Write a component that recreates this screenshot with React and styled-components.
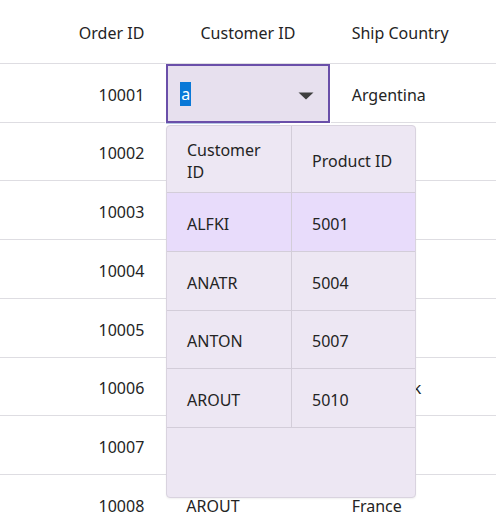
import React from "react";
import styled, { createGlobalStyle } from "styled-components";

const Global = createGlobalStyle`
  html, body { margin: 0; padding: 0; background: #ffffff; }
  body { font-family: "Noto Sans", "Open Sans", sans-serif; color: #242424; }
  * { box-sizing: border-box; }
`;

const Page = styled.div`
  position: relative;
  width: 496px;
  height: 531px;
  overflow: hidden;
  background: #fff;
`;

const Row = styled.div`
  display: grid;
  grid-template-columns: 165.33px 165.33px 165.34px;
  height: ${(p) => (p.$header ? "63.75px" : "58.75px")};
  border-bottom: 1px solid #dedde2;
`;

const Cell = styled.div`
  display: flex;
  align-items: center;
  justify-content: ${(p) => (p.$right ? "flex-end" : p.$center ? "center" : "flex-start")};
  padding: 4px 21px 0 21px;
  font-size: 16px;
  white-space: nowrap;
  overflow: hidden;
`;

const EditCell = styled.div`
  padding: 0 1px 0 1px;
  margin-bottom: -1px;
  background: #fff;
  position: relative;
  z-index: 1;
`;

const EditBox = styled.div`
  position: relative;
  height: 100%;
  border: 2px solid #6a4fa9;
  background: #e7e0ee;
  display: flex;
  align-items: center;
  padding: 1px 14px 0 12px;

  &::after {
    content: "";
    position: absolute;
    left: -2px;
    width: 114px;
    bottom: -3px;
    height: 1px;
    background: #b4c4e4;
  }
`;

const Selected = styled.span`
  background: #0a78d7;
  color: #fff;
  font-size: 16px;
  line-height: 24px;
  padding: 0 1px;
`;

const Spacer = styled.div`
  flex: 1;
`;

const Caret = styled.svg`
  display: block;
  width: 16px;
  height: 8px;
  margin-top: 5px;
`;

const Popup = styled.div`
  position: absolute;
  left: 166px;
  top: 125px;
  width: 250px;
  height: 373px;
  background: #ede7f3;
  border: 1px solid #d9d3df;
  border-radius: 4px;
  box-shadow: 0 1px 2px rgba(0, 0, 0, 0.06);
  overflow: hidden;
  z-index: 2;
`;

const PopRow = styled.div`
  display: grid;
  grid-template-columns: 125px 1fr;
  height: ${(p) => (p.$header ? "67px" : "58.75px")};
  border-bottom: 1px solid #d3cdd9;
  background: ${(p) => (p.$active ? "#e8dcfb" : "transparent")};
`;

const PopCell = styled.div`
  display: flex;
  align-items: center;
  padding: 4px 20px 0 20px;
  font-size: 16px;
  line-height: 22px;
  border-right: ${(p) => (p.$last ? "none" : "1px solid #d3cdd9")};
`;

const orders = [
  { id: 10001, cust: "", country: "Argentina", edit: true },
  { id: 10002, cust: "ANATR", country: "Mexico" },
  { id: 10003, cust: "ANTON", country: "Mexico" },
  { id: 10004, cust: "AROUT", country: "UK" },
  { id: 10005, cust: "ALFKI", country: "Spain" },
  { id: 10006, cust: "ANATR", country: "Denmark" },
  { id: 10007, cust: "ANTON", country: "Brazil" },
  { id: 10008, cust: "AROUT", country: "France" },
];

const items = [
  { c: "ALFKI", p: "5001", active: true },
  { c: "ANATR", p: "5004" },
  { c: "ANTON", p: "5007" },
  { c: "AROUT", p: "5010" },
];

export default function App() {
  return (
    <Page>
      <Global />
      <Row $header>
        <Cell $right>Order ID</Cell>
        <Cell $center>Customer ID</Cell>
        <Cell>Ship Country</Cell>
      </Row>
      {orders.map((o) => (
        <Row key={o.id}>
          <Cell $right>{o.id}</Cell>
          {o.edit ? (
            <EditCell>
              <EditBox>
                <Selected>a</Selected>
                <Spacer />
                <Caret viewBox="0 0 16 8">
                  <path d="M0.5 0.5 H15.5 L8 7.5 Z" fill="#3f3f3f" />
                </Caret>
              </EditBox>
            </EditCell>
          ) : (
            <Cell>{o.cust}</Cell>
          )}
          <Cell>{o.country}</Cell>
        </Row>
      ))}
      <Popup>
        <PopRow $header>
          <PopCell>Customer ID</PopCell>
          <PopCell $last>Product ID</PopCell>
        </PopRow>
        {items.map((it) => (
          <PopRow key={it.c} $active={it.active}>
            <PopCell>{it.c}</PopCell>
            <PopCell $last>{it.p}</PopCell>
          </PopRow>
        ))}
      </Popup>
    </Page>
  );
}
